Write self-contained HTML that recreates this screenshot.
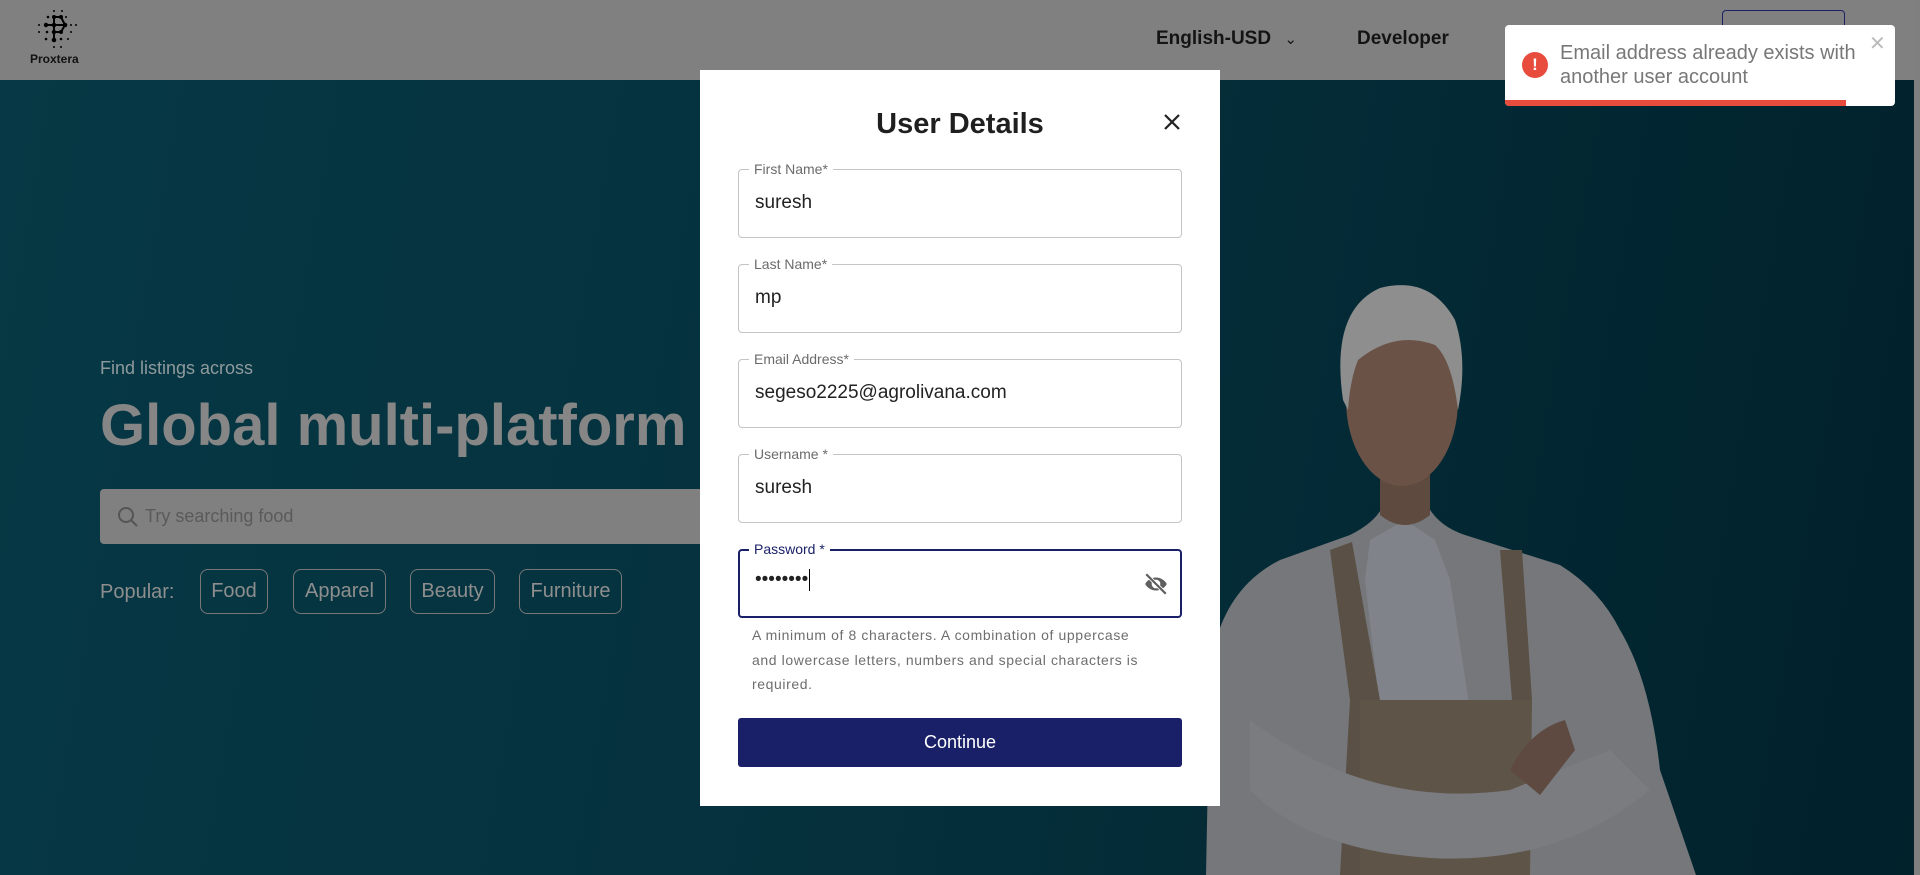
<!DOCTYPE html>
<html><head><meta charset="utf-8"><style>
*{margin:0;padding:0;box-sizing:border-box}
body{width:1920px;height:875px;overflow:hidden;position:relative;font-family:"Liberation Sans",sans-serif;background:#808080}
.header{position:absolute;left:0;top:0;width:1920px;height:80px;background:#808080}
.hero{position:absolute;left:0;top:80px;width:1914px;height:795px;background:linear-gradient(100deg,#063845 0%,#05313d 45%,#01212b 100%)}
.sb{position:absolute;left:1914px;top:0;width:6px;height:875px;background:#7f7f7f}
.nav{position:absolute;top:28px;font-size:19px;font-weight:bold;color:#141414}
.modal{position:absolute;left:700px;top:70px;width:520px;height:736px;background:#fff}
.title{position:absolute;left:0;width:520px;top:38px;text-align:center;font-size:29px;font-weight:bold;color:#1f1f1f}
.f{position:absolute;left:738px;width:444px;height:69px;border:1px solid #c4c4c4;border-radius:4px}
.f .l{position:absolute;left:10px;top:-9px;background:#fff;padding:0 5px;font-size:14px;color:#6b6b6b;line-height:16px}
.f .v{position:absolute;left:16px;top:22px;font-size:19px;color:#222}
.chip{position:absolute;top:569px;height:45px;border:1px solid #777;border-radius:8px;color:#8e8e8e;font-size:20px;line-height:43px;text-align:center}
</style></head><body>
<div class="header">
 <svg style="position:absolute;left:34px;top:8px" width="48" height="42" viewBox="0 0 48 42">
  <g fill="#000">
   <circle cx="20" cy="3" r="1"/><circle cx="28" cy="3" r="1"/>
   <circle cx="14" cy="9" r="1.3"/><circle cx="20" cy="9" r="2"/><circle cx="27" cy="9" r="2"/><circle cx="32" cy="9" r="1"/>
   <circle cx="5" cy="17" r="1"/><circle cx="12" cy="17" r="2.2"/><circle cx="20" cy="17" r="2.3"/><circle cx="31" cy="17" r="2.3"/><circle cx="37" cy="17" r="1"/><circle cx="42" cy="17" r="1"/>
   <circle cx="5" cy="24" r="1"/><circle cx="13" cy="24" r="1.3"/><circle cx="20" cy="24" r="2.2"/><circle cx="27" cy="24" r="2"/><circle cx="37" cy="24" r="1"/>
   <circle cx="12" cy="31" r="1.3"/><circle cx="20" cy="32" r="2.3"/><circle cx="27" cy="31" r="1.3"/><circle cx="34" cy="31" r="1"/>
   <circle cx="20" cy="39" r="1"/><circle cx="27" cy="39" r="1"/>
  </g>
  <path d="M20 32V9h7l4 8-4 7h-7M12 17h19" stroke="#000" stroke-width="2" fill="none"/>
 </svg>
 <div style="position:absolute;left:30px;top:52px;font-size:12px;font-weight:bold;color:#111">Proxtera</div>
 <div class="nav" style="left:1156px">English-USD <span style="font-weight:normal;font-size:15px;margin-left:8px">&#8964;</span></div>
 <div class="nav" style="left:1357px">Developer</div>
 <div style="position:absolute;left:1722px;top:10px;width:123px;height:50px;border:1px solid #1a2060;border-radius:4px"></div>
</div>
<div class="hero">
 <div style="position:absolute;left:100px;top:278px;font-size:18px;color:#8f9a9d">Find listings across</div>
 <div style="position:absolute;left:100px;top:312px;font-size:58px;font-weight:bold;color:#868686;white-space:nowrap">Global multi-platform</div>
 <div style="position:absolute;left:100px;top:409px;width:650px;height:55px;background:#808080;border-radius:4px">
  <svg style="position:absolute;left:16px;top:16px" width="24" height="24" viewBox="0 0 24 24"><circle cx="10" cy="10" r="7" stroke="#555" stroke-width="2" fill="none"/><path d="M15 15l6 6" stroke="#555" stroke-width="2"/></svg>
  <div style="position:absolute;left:45px;top:17px;font-size:18px;color:#5a5a5a">Try searching food</div>
 </div>
 <div style="position:absolute;left:100px;top:501px;font-size:20px;color:#8e8e8e">Popular:</div>
</div>
<div class="chip" style="left:200px;width:68px">Food</div>
<div class="chip" style="left:293px;width:93px">Apparel</div>
<div class="chip" style="left:410px;width:85px">Beauty</div>
<div class="chip" style="left:519px;width:103px">Furniture</div>
<svg style="position:absolute;left:1180px;top:250px" width="740" height="625" viewBox="0 0 740 625">
 <path d="M26 625 L30 420 Q40 340 100 310 L170 285 Q200 270 205 250 L245 250 Q255 275 285 285 L380 315 Q420 340 440 380 Q470 430 480 520 L516 625Z" fill="#75777a"/>
 <path d="M190 290 L225 270 L255 290 L270 330 L290 460 L200 460 L185 330Z" fill="#808389"/>
 <path d="M150 300 L172 292 L200 450 L180 625 L160 625 L170 450Z" fill="#5a5045"/>
 <path d="M320 300 L342 300 L352 450 L345 560 L330 560 L332 450Z" fill="#5a5045"/>
 <path d="M180 450 L352 450 L350 625 L180 625Z" fill="#5f5448"/>
 <path d="M70 470 Q190 560 330 540 L430 500 L470 540 Q380 615 250 608 Q130 600 70 540Z" fill="#7a7c80"/>
 <path d="M330 520 Q350 480 385 470 L395 500 L360 545Z" fill="#5e4a40"/>
 <path d="M200 200 L200 265 Q225 285 250 265 L250 200Z" fill="#5f4a40"/>
 <ellipse cx="222" cy="150" rx="56" ry="86" fill="#6a5246"/>
 <path d="M163 150 Q150 60 200 38 Q250 25 275 70 Q288 110 278 160 Q272 110 255 95 Q215 80 178 110 Q170 130 168 160Z" fill="#8e8e8e"/>
</svg>
<div class="sb"></div>
<div class="modal">
 <div class="title">User Details</div>
 <svg style="position:absolute;left:463px;top:43px" width="18" height="18" viewBox="0 0 18 18"><path d="M2 2L16 16M16 2L2 16" stroke="#222" stroke-width="2.2"/></svg>
</div>
<div class="f" style="top:169px"><span class="l">First Name*</span><span class="v">suresh</span></div>
<div class="f" style="top:264px"><span class="l">Last Name*</span><span class="v">mp</span></div>
<div class="f" style="top:359px"><span class="l">Email Address*</span><span class="v">segeso2225@agrolivana.com</span></div>
<div class="f" style="top:454px"><span class="l">Username *</span><span class="v">suresh</span></div>
<div class="f" style="top:549px;border:2px solid #1a2068"><span class="l" style="color:#1a2068;top:-10px;left:9px">Password *</span><span class="v" style="top:18px;left:15px;letter-spacing:0px">&#8226;&#8226;&#8226;&#8226;&#8226;&#8226;&#8226;&#8226;<span style="display:inline-block;width:1px;height:22px;background:#000;vertical-align:middle;margin-left:1px"></span></span>
 <svg style="position:absolute;left:402px;top:20px" width="28" height="26" viewBox="0 0 24 24"><path d="M12 6c-4.5 0-8.3 2.8-10 6 1.7 3.2 5.5 6 10 6s8.3-2.8 10-6c-1.7-3.2-5.5-6-10-6zm0 10a4 4 0 110-8 4 4 0 010 8z" fill="#5f5f5f"/><path d="M3 3l18 18" stroke="#fff" stroke-width="3.5"/><path d="M3 3l18 18" stroke="#5f5f5f" stroke-width="2"/></svg>
</div>
<div style="position:absolute;left:752px;top:623px;width:405px;font-size:14px;line-height:24.5px;color:#6e6e6e;letter-spacing:0.6px">A minimum of 8 characters. A combination of uppercase and lowercase letters, numbers and special characters is required.</div>
<div style="position:absolute;left:738px;top:718px;width:444px;height:49px;background:#1a2068;border-radius:3px;color:#fff;font-size:18px;text-align:center;line-height:49px">Continue</div>
<div style="position:absolute;left:1505px;top:25px;width:390px;height:81px;background:#fff;border-radius:4px;overflow:hidden">
 <div style="position:absolute;left:17px;top:27px;width:26px;height:26px;border-radius:50%;background:#e74c3c;color:#fff;font-weight:bold;font-size:17px;text-align:center;line-height:26px">!</div>
 <div style="position:absolute;left:55px;top:16px;font-size:20px;line-height:24px;color:#777">Email address already exists with<br>another user account</div>
 <div style="position:absolute;left:364px;top:6px;font-size:20px;color:#bbb">&#10005;</div>
 <div style="position:absolute;left:0;top:75px;width:341px;height:6px;background:#e74c3c"></div>
</div>
</body></html>
